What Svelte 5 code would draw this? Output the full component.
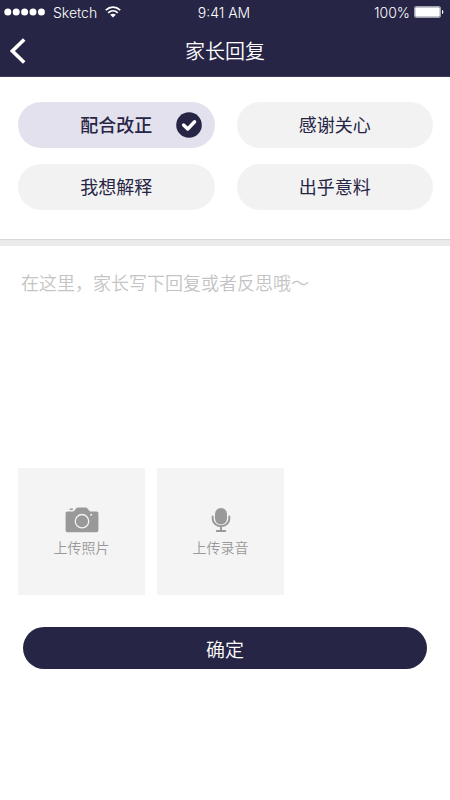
<script lang="ts">
  const options = ["配合改正", "感谢关心", "我想解释", "出乎意料"];

  let selected = $state("配合改正");
  let reply = $state("");

  function handleSubmit(e: Event) {
    e.preventDefault();
  }
</script>

<div class="page">
  <header>
    <div class="status-bar">
      <div class="carrier">
        <svg class="signal" width="41" height="8" viewBox="0 0 41 8" aria-hidden="true">
          {#each [0, 1, 2, 3, 4] as i}
            <circle cx={3.8 + i * 8.4} cy="4" r="3.5" fill="#fff" />
          {/each}
        </svg>
        <span>Sketch</span>
        <svg width="16" height="12" viewBox="0 0 16 12" aria-hidden="true">
          <g fill="none" stroke="#fff" stroke-width="1.7">
            <path d="M0.8 4.2C5 0.2 11 0.2 15.2 4.2" />
            <path d="M3.2 6.8C6 4.1 10 4.1 12.8 6.8" />
          </g>
          <path d="M5.2 8.7C6.8 7.3 9.2 7.3 10.8 8.7L8 11.5Z" fill="#fff" />
        </svg>
      </div>
      <span class="time">9:41 AM</span>
      <div class="battery">
        <span>100%</span>
        <svg width="30" height="12" viewBox="0 0 30 12" aria-hidden="true">
          <rect x="0.5" y="0.5" width="26" height="11" rx="1.5" fill="none" stroke="#a3a2ae" />
          <rect x="1.2" y="1.2" width="24.6" height="9.6" rx="1" fill="#fff" />
          <path d="M28 4C29.8 4.4 29.8 7.6 28 8Z" fill="#fff" />
        </svg>
      </div>
    </div>
    <nav>
      <button type="button" class="back" aria-label="返回">
        <svg width="16" height="26" viewBox="0 0 16 26" aria-hidden="true">
          <path d="M14.2 1.5L2.4 13L14.2 24.5" fill="none" stroke="#fff" stroke-width="3.6" />
        </svg>
      </button>
      <h1>家长回复</h1>
    </nav>
  </header>

  <form onsubmit={handleSubmit}>
    <div class="options">
      {#each options as option}
        <button
          type="button"
          class="option"
          class:selected={selected === option}
          aria-pressed={selected === option}
          onclick={() => (selected = option)}
        >
          {option}
          {#if selected === option}
            <svg class="check" width="26" height="26" viewBox="0 0 26 26" aria-hidden="true">
              <circle cx="13" cy="13" r="12.8" fill="#272545" />
              <path
                d="M7.6 13L11.7 17L18.6 9.8"
                fill="none"
                stroke="#fff"
                stroke-width="3.4"
                stroke-linecap="round"
                stroke-linejoin="round"
              />
            </svg>
          {/if}
        </button>
      {/each}
    </div>

    <div class="divider"></div>

    <textarea
      bind:value={reply}
      aria-label="回复内容"
      placeholder="在这里，家长写下回复或者反思哦～"
    ></textarea>

    <div class="uploads">
      <button type="button" class="upload">
        <svg width="34" height="26" viewBox="0 0 34 26" aria-hidden="true">
          <path
            d="M2.5 4.5H8C9.4 4.5 10.3 2.5 11.3 1.3C11.8 0.7 12.2 0.5 13 0.5H20.5C21.3 0.5 21.8 0.7 22.3 1.3C23.4 2.6 24.2 4.5 25.6 4.5H31.5C32.7 4.5 33.4 5.2 33.4 6.4V23.2C33.4 24.5 32.7 25.2 31.5 25.2H2.5C1.3 25.2 0.6 24.5 0.6 23.2V6.4C0.6 5.2 1.3 4.5 2.5 4.5Z"
            fill="#999"
          />
          <rect x="4.5" y="1.6" width="3.6" height="1.4" rx="0.7" fill="#999" />
          <circle cx="17" cy="14.2" r="6.7" fill="none" stroke="#f4f4f4" stroke-width="1.3" />
          <circle cx="26.2" cy="7.8" r="1" fill="#f4f4f4" />
        </svg>
        <span>上传照片</span>
      </button>
      <button type="button" class="upload">
        <svg width="20" height="26" viewBox="0 0 20 26" aria-hidden="true">
          <rect x="4" y="1" width="12" height="16.4" rx="5.8" fill="#999" />
          <path
            d="M1.7 9.5V11.7C1.7 16 5.4 19.2 10 19.2C14.6 19.2 18.3 16 18.3 11.7V9.5M10 19.2V24M5.8 24H14.2"
            fill="none"
            stroke="#999"
            stroke-width="2"
            stroke-linecap="round"
          />
        </svg>
        <span>上传录音</span>
      </button>
    </div>

    <button type="submit" class="submit">确定</button>
  </form>
</div>

<style>
  :global(body) {
    margin: 0;
    background: #fff;
  }

  .page {
    font-family: "Noto Sans CJK SC", "Liberation Sans", sans-serif;
    font-weight: 350;
    color: #272545;
  }

  button {
    border: none;
    padding: 0;
    font: inherit;
    color: inherit;
    cursor: pointer;
  }

  svg {
    display: block;
  }

  header {
    background: #272545;
    color: #fff;
    border-bottom: 1px solid #3c3962;
  }

  .status-bar {
    display: grid;
    grid-template-columns: 1fr auto 1fr;
    align-items: center;
    height: 24px;
    padding: 0 6px 2px 4px;
    font-family: Inter, "Liberation Sans", sans-serif;
    font-size: 14px;
    font-weight: 300;
  }

  .carrier,
  .battery {
    display: flex;
    align-items: center;
  }

  .carrier {
    gap: 8px;
  }

  .battery {
    justify-content: flex-end;
    gap: 4px;
  }

  nav {
    display: grid;
    grid-template-columns: 40px 1fr 40px;
    align-items: center;
    height: 50px;
  }

  .back {
    padding-left: 10px;
    background: none;
  }

  h1 {
    margin: 0;
    font-size: 20px;
    font-weight: inherit;
    line-height: 24px;
    text-align: center;
  }

  .options {
    display: grid;
    grid-template-columns: 1fr 1fr;
    gap: 16px 22px;
    padding: 25px 17px 29px 18px;
  }

  .option {
    position: relative;
    height: 46px;
    padding-bottom: 2px;
    border-radius: 23px;
    background: #f2f2f2;
    font-size: 18px;
    font-weight: 400;
  }

  .option.selected {
    background: #e3e1ed;
    font-weight: 500;
  }

  .check {
    position: absolute;
    top: 10px;
    right: 13px;
  }

  .divider {
    height: 6px;
    border-top: 1px solid #d8d8d8;
    background: #ebebeb;
  }

  textarea {
    display: block;
    box-sizing: border-box;
    width: 100%;
    height: 222px;
    padding: 22px 21px;
    border: none;
    outline: none;
    resize: none;
    background: none;
    font: inherit;
    font-size: 18px;
    line-height: 28px;
    color: inherit;
  }

  textarea::placeholder {
    color: #c4c4c4;
  }

  .uploads {
    display: flex;
    gap: 12px;
    padding: 0 18px;
  }

  .upload {
    display: flex;
    flex-direction: column;
    align-items: center;
    justify-content: center;
    gap: 4px;
    width: 127px;
    height: 127px;
    background: #f4f4f4;
    color: #999;
    font-size: 14px;
    line-height: 20px;
  }

  .submit {
    display: block;
    width: calc(100% - 46px);
    height: 42px;
    margin: 32px 23px;
    border-radius: 21px;
    background: #272545;
    color: #fff;
    font-size: 19px;
  }
</style>
